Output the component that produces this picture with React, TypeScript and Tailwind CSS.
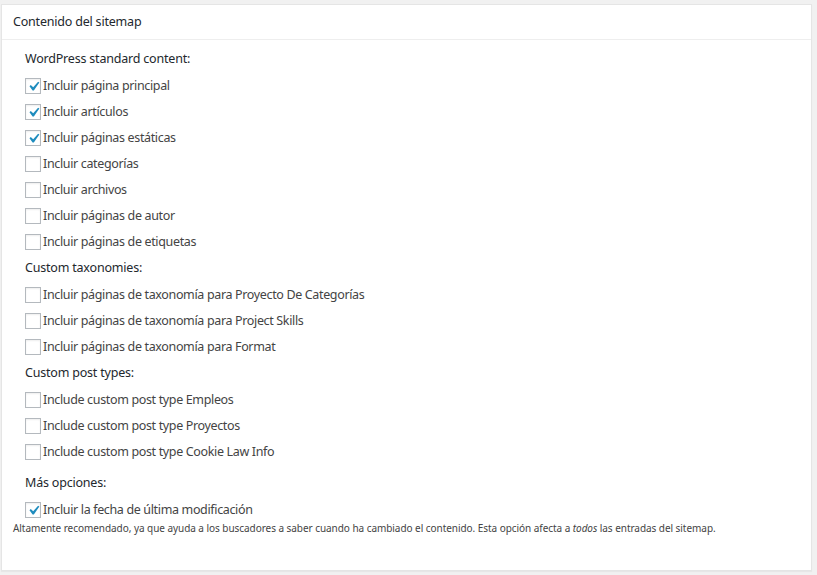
import React from 'react';

interface Option {
  label: string;
  checked?: boolean;
}

interface Section {
  title: string;
  options: Option[];
}

const SECTIONS: Section[] = [
  {
    title: 'WordPress standard content:',
    options: [
      { label: 'Incluir página principal', checked: true },
      { label: 'Incluir artículos', checked: true },
      { label: 'Incluir páginas estáticas', checked: true },
      { label: 'Incluir categorías' },
      { label: 'Incluir archivos' },
      { label: 'Incluir páginas de autor' },
      { label: 'Incluir páginas de etiquetas' },
    ],
  },
  {
    title: 'Custom taxonomies:',
    options: [
      { label: 'Incluir páginas de taxonomía para Proyecto De Categorías' },
      { label: 'Incluir páginas de taxonomía para Project Skills' },
      { label: 'Incluir páginas de taxonomía para Format' },
    ],
  },
  {
    title: 'Custom post types:',
    options: [
      { label: 'Include custom post type Empleos' },
      { label: 'Include custom post type Proyectos' },
      { label: 'Include custom post type Cookie Law Info' },
    ],
  },
];

const Checkbox = ({ checked }: { checked?: boolean }) => (
  <span className="relative inline-block w-[16px] h-[16px] shrink-0 border border-[#b4b9be] bg-white shadow-[inset_0_1px_2px_rgba(0,0,0,0.07)]">
    {checked && (
      <svg viewBox="0 0 20 20" className="absolute -left-[2px] -top-[2px] w-[19px] h-[19px]">
        <path fill="#1e8cbe" d="M14.83 4.89l1.34.94-5.81 8.38H9.02L5.78 9.67l1.34-1.25 2.57 2.4z" />
      </svg>
    )}
  </span>
);

const Row = ({ label, checked }: Option) => (
  <label className="flex items-center h-[26px] gap-[2px] tracking-[-0.35px]">
    <Checkbox checked={checked} />
    <span>{label}</span>
  </label>
);

export default function App() {
  return (
    <div
      className="w-[817px] h-[575px] bg-[#f1f1f1] pt-[4px] pl-[1px] text-[12.5px] tracking-[-0.2px] text-[#444]"
      style={{ fontFamily: '"Noto Sans", "Open Sans", sans-serif' }}
    >
      <div className="w-[811px] h-[567px] bg-white border border-[#e5e5e5] shadow-[0_1px_1px_rgba(0,0,0,0.04)]">
        <div className="h-[35px] flex items-center px-[11px] border-b border-[#eee] text-[#23282d]">
          Contenido del sitemap
        </div>
        <div className="pt-[6px] px-[23px]">
          {SECTIONS.map((section) => (
            <div key={section.title}>
              <div className="h-[27px] flex items-center text-[#23282d]">{section.title}</div>
              {section.options.map((opt) => (
                <Row key={opt.label} {...opt} />
              ))}
            </div>
          ))}
          <div className="mt-[4px]">
            <div className="h-[28px] flex items-center text-[#23282d]">Más opciones:</div>
            <Row label="Incluir la fecha de última modificación" checked />
          </div>
        </div>
        <p className="px-[11px] text-[10px] leading-[14px] tracking-[-0.05px] mt-[-2px] text-[#444]">
          Altamente recomendado, ya que ayuda a los buscadores a saber cuando ha cambiado el contenido. Esta opción afecta a <em>todos</em> las entradas del sitemap.
        </p>
      </div>
    </div>
  );
}
